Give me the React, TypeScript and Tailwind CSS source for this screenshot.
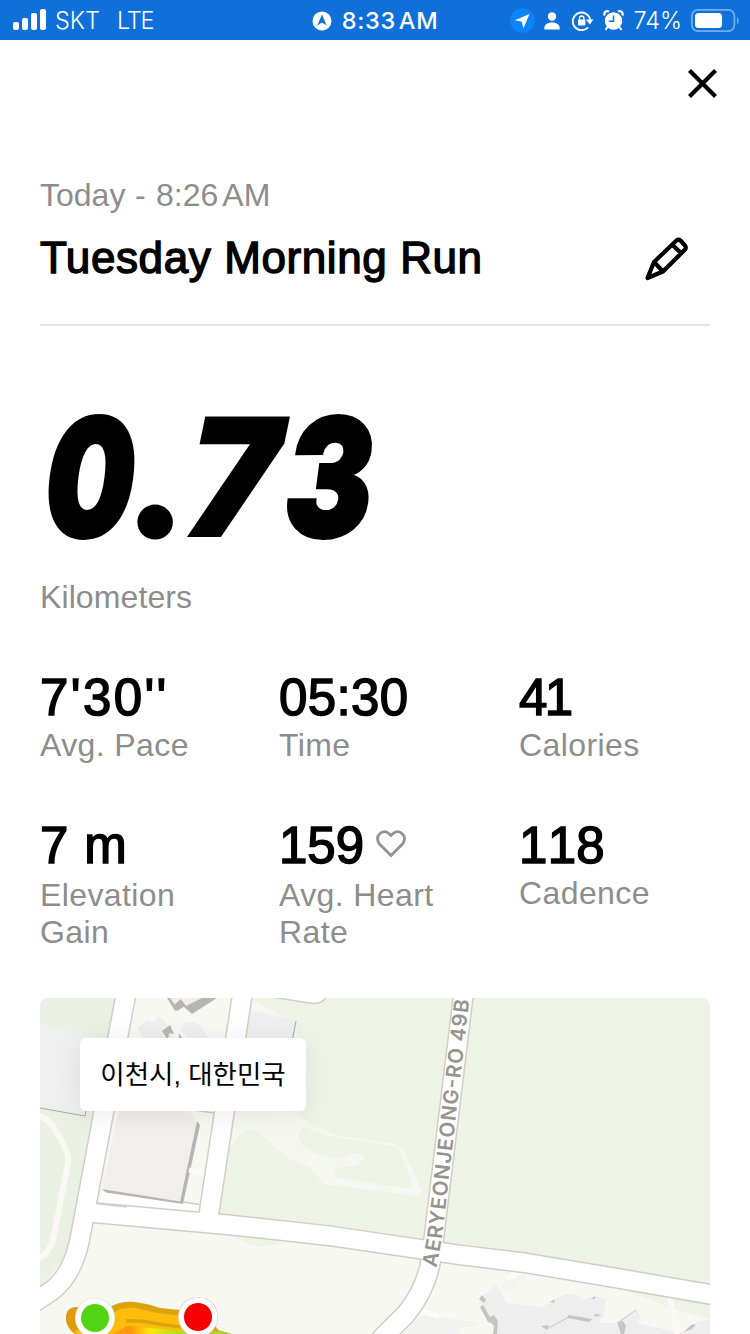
import React from 'react';

const stats = [
  { value: "7'30''", label: 'Avg. Pace', spacing: '[font-kerning:none] tracking-[2.4px]' },
  { value: '05:30', label: 'Time', spacing: 'tracking-[0.4px]' },
  { value: '41', label: 'Calories', spacing: 'tracking-[-2.5px]' },
];

const moreStats = [
  { value: '7 m', label: 'Elevation Gain', heart: false, spacing: 'tracking-[0.8px]', labelClass: 'mt-[2px] w-[160px]' },
  { value: '159', label: 'Avg. Heart Rate', heart: true, spacing: '', labelClass: 'mt-[2px] w-[180px]' },
  { value: '118', label: 'Cadence', heart: false, spacing: '[font-kerning:none] tracking-[0.3px]', labelClass: '' },
];

const distance = [
  { char: '0', className: 'w-[89px] scale-x-[0.77] [-webkit-text-stroke:4px_black]' },
  { char: '.', className: "mb-[6px] ml-[3px] w-[45px] font-['Lato',sans-serif] [-webkit-text-stroke:9px_black]" },
  { char: '7', className: 'w-[102px] scale-x-[0.94] skew-x-[-3deg] [-webkit-text-stroke:2px_black]' },
  { char: '3', className: 'w-[90px] scale-x-[0.8] [-webkit-text-stroke:4px_black]' },
];

function StatusBar() {
  return (
    <header className="grid h-10 grid-cols-[1fr_auto_1fr] items-center bg-[#0e70d8] pt-px font-['Inter',sans-serif] text-[23.5px] leading-none text-white">
      <div className="flex items-center pl-[13px]">
        <svg className="-mt-px" width="33" height="22" viewBox="0 0 33 22" fill="white">
          <rect x="0" y="13" width="6" height="8" rx="2" />
          <rect x="9" y="9" width="6" height="12" rx="2" />
          <rect x="18" y="4" width="6" height="17" rx="2" />
          <rect x="27" y="0" width="6" height="21" rx="2" />
        </svg>
        <span className="ml-[9px] font-light">SKT</span>
        <span className="ml-[17px] font-light tracking-[-1.2px]">LTE</span>
      </div>
      <div className="flex items-center">
        <svg width="20" height="20" viewBox="0 0 20 20">
          <circle cx="10" cy="10" r="9.5" fill="white" />
          <path d="M10 3.6 14.6 14.4 10 11.4 5.4 14.4Z" fill="#0e70d8" />
        </svg>
        <span className="ml-[10px] font-medium tracking-[0.7px] [word-spacing:-4px]">8:33 AM</span>
      </div>
      <div className="flex items-center justify-end pr-[11px]">
        <svg width="25" height="25" viewBox="0 0 25 25">
          <circle cx="12.5" cy="12.5" r="12.3" fill="#0a84ff" />
          <path d="M19.5 6 4.8 12.3 11.8 13.7 13.4 20.6Z" fill="white" />
        </svg>
        <svg className="ml-[9px]" width="16" height="18" viewBox="0 0 16 18" fill="white">
          <circle cx="8" cy="4.5" r="4.2" />
          <path d="M0.3 17.5C0 12.5 3 10.5 8 10.5S16 12.5 15.7 17.5Z" />
        </svg>
        <svg className="ml-[12px]" width="22" height="20" viewBox="0 0 22 20">
          <path d="M16.1 16.3A8.8 8.8 0 1 1 18.3 9" fill="none" stroke="white" strokeWidth="1.8" />
          <path d="M14 8.6H21.5L17.8 13.4Z" fill="white" />
          <rect x="6" y="8.6" width="7.4" height="5.8" rx="1" fill="white" />
          <path d="M7.5 9V7.2a2.2 2.2 0 0 1 4.4 0V9" fill="none" stroke="white" strokeWidth="1.3" />
        </svg>
        <svg className="ml-[9px]" width="21" height="21" viewBox="0 0 21 21">
          <path d="M1.7 5.5C.5 2.5 3 .2 6 1.6M19.3 5.5C20.5 2.5 18 .2 15 1.6" fill="none" stroke="white" strokeWidth="2.2" />
          <circle cx="10.5" cy="11" r="8.7" fill="white" />
          <path d="m4.5 17-2 2.8M16.5 17l2 2.8" stroke="white" strokeWidth="2" />
          <path d="M10.5 5.5V11.3H5.8" fill="none" stroke="#0e70d8" strokeWidth="1.5" />
        </svg>
        <span className="ml-[9px] font-light">74%</span>
        <svg className="-mt-px ml-[9px]" width="48" height="23" viewBox="0 0 48 23">
          <rect x="0.9" y="0.9" width="42.5" height="21.2" rx="6" fill="none" stroke="white" strokeOpacity="0.42" strokeWidth="1.8" />
          <rect x="4" y="4" width="27" height="15" rx="3.5" fill="white" />
          <path d="M46 8v7.5c2.2-1.5 2.2-6 0-7.5Z" fill="white" fillOpacity="0.45" />
        </svg>
      </div>
    </header>
  );
}

function StatValue({ children, spacing = '' }: { children: React.ReactNode; spacing?: string }) {
  return (
    <span className={`block whitespace-pre text-[51px] leading-[56px] [-webkit-text-stroke:1.5px_black] ${spacing}`}>
      {children}
    </span>
  );
}

function RouteMap() {
  const roads = [
    'M126 994 81 1233Q74 1275 50 1292L30 1305',
    'M243 990 207 1226',
    'M464 990 433 1245Q430 1285 406 1314L378 1342',
    'M86 1212 230 1225 327 1235.5 460 1255 523 1262.5 604 1276 720 1296',
  ];

  return (
    <svg className="block h-[336px] w-full" viewBox="40 998 670 336">
      <defs>
        <linearGradient id="heat" gradientUnits="userSpaceOnUse" x1="105" y1="1330" x2="230" y2="1334">
          <stop offset="0" stopColor="#ffab0b" />
          <stop offset="0.2" stopColor="#ff930d" />
          <stop offset="0.36" stopColor="#ffe60b" />
          <stop offset="0.56" stopColor="#b9df20" />
          <stop offset="1" stopColor="#a9d12c" />
        </linearGradient>
      </defs>
      <rect x="40" y="998" width="670" height="336" fill="#f7f8f2" />

      {/* parks */}
      <path d="M40 998H116L93 1113 70 1240 60 1263 40 1288Z" fill="#eaf1e4" />
      <path d="M252 998H710V1285L610 1267 523 1253 424 1240 327 1226 217 1214Z" fill="#edf3e5" />
      <path d="M234 1237Q262 1254 283 1240Z" fill="#edf3e5" />
      <path d="M620 1288Q664 1307 710 1319V1300Z" fill="#edf3e5" />
      <path d="M250 1000 258 1003 297 1024 293 1112 313 1126 340 1136 393 1143 403 1149 423 1193 417 1196 323 1184 311 1167 290 1160 257 1131Q250 1129 243 1132 235 1138 229 1150L222 1162Z" fill="#f6f7f0" />
      <path d="M304 1127Q293 1135 304 1147 320 1157 341 1159L352 1154Q363 1152 364 1157 362 1164 353 1166 337 1166 333 1173 334 1178 345 1179L405 1188Q412 1187 412 1183L399 1150Q395 1145 385 1145L329 1136Z" fill="#edf3e5" />
      <path d="M325 1159 341 1158 350 1154Q361 1152 364 1157 362 1164 353 1166 337 1166 329 1172L312 1165Z" fill="#f6f7f0" />

      {/* buildings */}
      <path d="M40 1024 99 1038 85 1116 40 1108Z" fill="#f0efef" />
      <path d="m40 1108 45 8 1-5" fill="none" stroke="#a9a9a8" />
      <path d="M137 1028 148 1020 153 1022 159 1016 171 1028 170 1034 178 1042H147Z" fill="#efeeee" />
      <path d="M180 1030 186 1022 196 1022 206 1033 210 1040H190Z" fill="#efeeee" />
      <path d="m162 1031 8-6 4 9-5-1-1 7ZM179 1033l3 5h-3Z" fill="#b5b5b3" />
      <path d="m167 998 8 13 8-5 9 8 25-16Z" fill="#b5b5b3" />
      <path d="m170 998 5 7 6-6 5 7 4-2 12-6Z" fill="#f0efee" />
      <path d="m173 1006 7-6 5 6-8 5Z" fill="#b5b5b3" />
      <path d="M102 1188 179 1202 196 1123 193 1116 187 1109H119Z" fill="#f0efee" />
      <path d="M248 1010 297 1021 293 1048H239Z" fill="#efeeee" />
      <path d="M296 1021 292 1042" stroke="#a5a5a4" />
      <path d="M102 1191 184 1203 209 1206 207 1220 96 1212Z" fill="white" />
      <path d="M102 1189 106 1192.5 183 1204 200 1125 197 1121 180 1201.5Z" fill="#b5b5b3" />
      <path d="m189 1170 14 3" stroke="#fcfbf7" strokeWidth="5" />
      <path d="M36 1115Q48 1118 56 1131 69 1152 68 1162L55 1230Q51 1256 36 1259" fill="none" stroke="#f9f8f3" strokeWidth="6" />

      {/* south-east blocks */}
      <path d="M480 1298 497 1284 507 1303 543 1307 553 1300 566 1294 579 1295 580 1300 596 1296 606 1299 604 1315 599 1323 616 1323 637 1309 641 1318 637 1323 680 1333 699 1321 710 1320V1334H493L496 1326 483 1313Z" fill="#efeeee" />
      <path d="M421 1316 450 1318 477 1322V1327H460V1334H403Z" fill="#f2f2f1" />
      <path d="m511 1276 18-1-21 20-8-8Z" fill="#f3f3f1" />
      <path d="m507 1279 13-7M421 1310l18 7" stroke="#fffdf8" strokeWidth="5" />
      <path d="m479 1299 3-4 4 5-2 3ZM480 1307l3-2 7 12 4-2 4 6-1 13h-4l1-8-3-3-3-1ZM550 1302l5-3-1 4ZM568 1315l24 4-3 3-21-4ZM591 1299l4-3v3ZM594 1314l8 1-7 2ZM541 1326l8-1-2 5ZM617 1322l6-1 3 5-2 8h-3ZM684 1332l7-7 5-1-4 5Z" fill="#c5c5c3" />
      <path d="m547 1329 22-12M620 1321l16-11" stroke="#c5c5c3" />
      <path d="m670 1297 2 17 6 20" fill="none" stroke="#faf9f7" strokeWidth="6" />

      {/* roads */}
      <g fill="none" stroke="#d3cdc5" strokeWidth="21.4">
        {roads.map((d) => <path key={d} d={d} />)}
      </g>
      <g fill="none" stroke="white" strokeWidth="18.4">
        {roads.map((d) => <path key={d} d={d} />)}
      </g>
      <path d="m96 1203.5 31 3.5M183 1202l16 2.5M187 1109l27 4" stroke="#d3cdc5" strokeWidth="1.3" />
      <path d="m259 995 50 8q13 2 17-6" fill="white" stroke="#d3cdc5" strokeWidth="1.5" />

      <path id="street" d="M436.5 1268 442 1238 471 985" fill="none" />
      <text fill="#97948e" className="font-['Inter',sans-serif] text-[20.5px] font-semibold">
        <textPath href="#street" textLength="270" lengthAdjust="spacing">AERYEONJEONG-RO 49B</textPath>
      </text>

      {/* recorded route */}
      <path d="M66 1318Q66 1307 78 1307H110Q120 1301 135 1302 150 1304 160 1308L180 1310H205L218 1330 232 1334H75Q66 1328 66 1318Z" fill="#dca40c" />
      <path d="M70 1318Q71 1310 80 1310L112 1314Q122 1306 136 1308L157 1313 200 1318 190 1334H76Z" fill="#ffbd0b" />
      <path d="M66 1318Q66 1307 78 1307V1331Q66 1328 66 1318Z" fill="#e09b0a" />
      <path d="M126 1321Q142 1320 158 1324L182 1327" fill="none" stroke="#dca40c" strokeWidth="3.5" />
      <path d="M112 1334 127 1326 150 1328 185 1331H220L232 1334Z" fill="url(#heat)" />
      <circle cx="95" cy="1318" r="20" fill="#c6ecb5" />
      <circle cx="95" cy="1318" r="19.5" fill="white" />
      <circle cx="95" cy="1318" r="14" fill="#51d514" />
      <circle cx="198" cy="1317" r="20" fill="#f7b6b6" />
      <circle cx="198" cy="1317" r="19.5" fill="white" />
      <circle cx="198" cy="1317" r="14" fill="#f40000" />
    </svg>
  );
}

export default function App() {
  return (
    <div className="h-[1334px] w-[750px] overflow-hidden bg-white font-['Liberation_Sans',Arial,sans-serif] text-black">
      <StatusBar />
      <div className="flex h-[132px] items-start justify-end pt-[28px] pr-[32px]">
        <svg width="31" height="31" viewBox="0 0 31 31">
          <path d="m2.5 2.5 26 26m0-26-26 26" stroke="black" strokeWidth="4.2" />
        </svg>
      </div>

      <main className="px-10">
        <section className="h-[154px] border-b-2 border-[#e5e5e5]">
          <p className="pt-[5px] text-[32px] leading-[37px] whitespace-pre text-[#8d8d8d]">
            Today<span className="tracking-[0.7px]"> - </span>8:26<span className="[word-spacing:-3px]"> AM</span>
          </p>
          <div className="mt-[18px] flex items-center justify-between pr-[21px]">
            <h1 className="text-[44px] leading-[52px] tracking-[0.6px] [-webkit-text-stroke:1.4px_black]">Tuesday Morning Run</h1>
            <svg className="mt-[3px]" width="46" height="46" viewBox="0 0 46 46" fill="none" stroke="black" strokeWidth="4.2" strokeLinejoin="round">
              <path d="M4.5 41 11 25 33.5 3.5Q35.5 2 37.5 3.5L42 8.5Q43.5 10.5 42 12.5L20 34.5ZM11 25l9 9.5M29.5 8l9 8.5" />
            </svg>
          </div>
        </section>

        <section className="h-[342px]">
          <div className="flex h-[246px] items-end pl-[5px] text-[163px] leading-[190px] font-black italic font-['Inter',sans-serif]">
            {distance.map((d) => (
              <span key={d.char} className={`flex justify-center ${d.className}`}>{d.char}</span>
            ))}
          </div>
          <p className="mt-[7px] text-[32px] leading-[37px] tracking-[0.1px] text-[#8d8d8d]">Kilometers</p>
        </section>

        <section className="grid h-[148px] grid-cols-[239px_240px_1fr] pt-[2px]">
          {stats.map((s) => (
            <div key={s.label}>
              <StatValue spacing={s.spacing}>{s.value}</StatValue>
              <span className="mt-px block text-[32px] leading-[37px] tracking-[0.4px] text-[#8d8d8d]">{s.label}</span>
            </div>
          ))}
        </section>
        <section className="grid h-[182px] grid-cols-[239px_240px_1fr] pt-[2px]">
          {moreStats.map((s) => (
            <div key={s.label}>
              <div className="flex items-center">
                <StatValue spacing={s.spacing}>{s.value}</StatValue>
                {s.heart && (
                  <svg className="mb-[5px] ml-[12px]" width="30" height="28" viewBox="0 0 30 28" fill="none" stroke="#949494" strokeWidth="2.8">
                    <path d="M15 25.5 3.5 14Q-.5 8 3.5 4 8-.5 13 3.5L15 5.5 17 3.5Q22-.5 26.5 4 30.5 8 26.5 14Z" />
                  </svg>
                )}
              </div>
              <div className="pt-px">
                <span className={`block text-[32px] leading-[37px] tracking-[0.4px] text-[#8d8d8d] ${s.labelClass}`}>{s.label}</span>
              </div>
            </div>
          ))}
        </section>

        <section className="relative overflow-hidden rounded-t-[8px]">
          <RouteMap />
          <div className="absolute top-10 left-10 flex h-[73px] w-[226px] items-center justify-center rounded-[6px] bg-white pt-[3px] font-['Liberation_Sans','Noto_Sans_CJK_KR',sans-serif] text-[26.5px] shadow-[0_4px_28px_rgba(0,0,0,0.08)]">
            이천시, 대한민국
          </div>
        </section>
      </main>
    </div>
  );
}
